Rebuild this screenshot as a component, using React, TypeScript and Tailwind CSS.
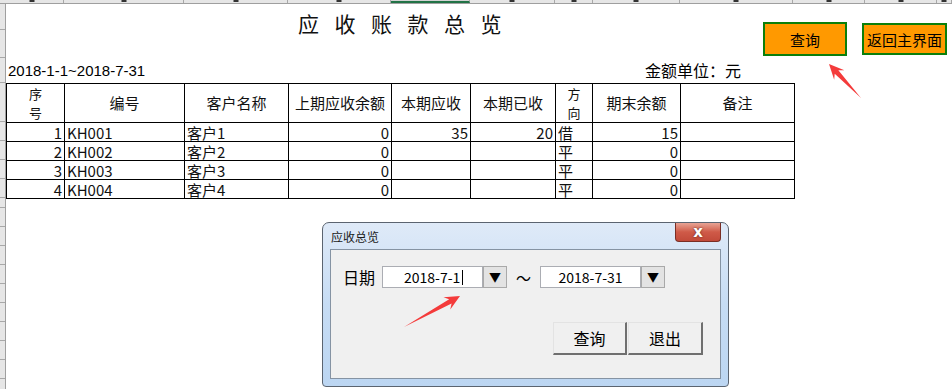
import React from "react"

const cjk = { fontFamily: '"Noto Sans CJK SC", "Liberation Sans", sans-serif' }

const colHeads = [64, 120, 104, 103, 79, 85, 38, 87, 113, 72, 72, 15]
const rowHeads = [26, 28, 25, 39, 19, 19, 19, 19, 10, 19, 19, 19, 19, 19, 19, 19, 19, 19, 19]

const rows = [
  { no: 1, code: "KH001", name: "客户1", prev: "0", due: "35", got: "20", dir: "借", end: "15" },
  { no: 2, code: "KH002", name: "客户2", prev: "0", due: "", got: "", dir: "平", end: "0" },
  { no: 3, code: "KH003", name: "客户3", prev: "0", due: "", got: "", dir: "平", end: "0" },
  { no: 4, code: "KH004", name: "客户4", prev: "0", due: "", got: "", dir: "平", end: "0" },
]

// red snipping-tool style arrow, tail -> tip
function arrowPoints(sx: number, sy: number, tx: number, ty: number) {
  const len = Math.hypot(tx - sx, ty - sy)
  const dx = (tx - sx) / len
  const dy = (ty - sy) / len
  const nx = -dy
  const ny = dx
  const head = 15
  const bx = tx - dx * (head - 4)
  const by = ty - dy * (head - 4)
  const wx = tx - dx * head
  const wy = ty - dy * head
  const p = [
    [sx, sy],
    [bx + nx * 2.5, by + ny * 2.5],
    [wx + nx * 7, wy + ny * 7],
    [tx, ty],
    [wx - nx * 7, wy - ny * 7],
    [bx - nx * 2.5, by - ny * 2.5],
  ]
  return p.map((q) => q.join(",")).join(" ")
}

function Cell({ children, align = "left" }: { children?: React.ReactNode; align?: "left" | "right" }) {
  return (
    <td
      className={`border border-black px-[2px] py-0 text-[15px] leading-none text-[#111] ${
        align === "right" ? "text-right" : "text-left"
      }`}
    >
      {children}
    </td>
  )
}

function Stacked({ a, b }: { a: string; b: string }) {
  return (
    <div className="flex flex-col items-center">
      <div className="text-[13px] leading-[19px]">{a}</div>
      <div className="text-[13px] leading-[19px]">{b}</div>
    </div>
  )
}

function DropBtn() {
  return (
    <div className="flex h-[22px] w-[24px] items-center justify-center border border-[#a9a9a9] bg-[#e3e3e3] text-[12px] leading-none text-black">
      ▼
    </div>
  )
}

export default function App() {
  return (
    <div className="relative flex h-[389px] w-[952px] flex-col overflow-hidden bg-white" style={cjk}>
      {/* column headers strip */}
      <div className="flex h-[4px] shrink-0 border-b border-[#9f9f9f] bg-[#e6e6e6]">
        {colHeads.map((w, i) => (
          <div
            key={i}
            className={`relative h-full shrink-0 border-r border-[#a8a8a8] ${i === 4 ? "border-b-2 border-b-[#217346] bg-[#d3d3d3]" : ""}`}
            style={{ width: w }}
          >
            <div className="absolute bottom-[1px] left-1/2 h-[2px] w-[5px] -translate-x-1/2 bg-[#333]" />
          </div>
        ))}
      </div>

      <div className="flex flex-1">
        {/* row headers strip */}
        <div className="flex w-[6px] shrink-0 flex-col border-r border-[#9f9f9f] bg-[#e6e6e6]">
          {rowHeads.map((h, i) => (
            <div key={i} className="shrink-0 border-b border-[#a8a8a8]" style={{ height: h }} />
          ))}
        </div>

        {/* sheet */}
        <div className="flex w-[788px] flex-col">
          <div className="flex h-[54px] justify-center pl-[15px] pt-[9px]">
            <div className="text-[21px] leading-none tracking-[15.5px] text-[#111]">应收账款总览</div>
          </div>
          <div className="flex h-[25px] items-end justify-between pb-[5px] pl-[2px] pr-[53px]">
            <span className="text-[15px] leading-none text-black" style={{ fontFamily: '"Liberation Sans", sans-serif' }}>
              2018-1-1~2018-7-31
            </span>
            <span className="text-[16px] leading-none text-black">金额单位：元</span>
          </div>

          <table className="w-[788px] table-fixed border-collapse">
            <colgroup>
              <col className="w-[58px]" />
              <col className="w-[120px]" />
              <col className="w-[104px]" />
              <col className="w-[103px]" />
              <col className="w-[79px]" />
              <col className="w-[85px]" />
              <col className="w-[37px]" />
              <col className="w-[88px]" />
              <col className="w-[114px]" />
            </colgroup>
            <thead>
              <tr className="h-[39px] text-[15px] font-normal text-[#111]">
                <th className="border border-black font-normal">
                  <Stacked a="序" b="号" />
                </th>
                <th className="border border-black font-normal">编号</th>
                <th className="border border-black font-normal">客户名称</th>
                <th className="border border-black font-normal">上期应收余额</th>
                <th className="border border-black font-normal">本期应收</th>
                <th className="border border-black font-normal">本期已收</th>
                <th className="border border-black font-normal">
                  <Stacked a="方" b="向" />
                </th>
                <th className="border border-black font-normal">期末余额</th>
                <th className="border border-black font-normal">备注</th>
              </tr>
            </thead>
            <tbody>
              {rows.map((r) => (
                <tr key={r.no} className="h-[19px]">
                  <Cell align="right">{r.no}</Cell>
                  <Cell>{r.code}</Cell>
                  <Cell>{r.name}</Cell>
                  <Cell align="right">{r.prev}</Cell>
                  <Cell align="right">{r.due}</Cell>
                  <Cell align="right">{r.got}</Cell>
                  <Cell>{r.dir}</Cell>
                  <Cell align="right">{r.end}</Cell>
                  <Cell />
                </tr>
              ))}
            </tbody>
          </table>
        </div>
      </div>

      {/* floating sheet buttons */}
      <div className="absolute left-[763px] top-[22px] flex h-[34px] w-[84px] items-center justify-center border-2 border-[#0b7f0b] bg-[#ff9900] text-[15px] leading-none text-black">
        查询
      </div>
      <div className="absolute left-[862px] top-[23px] flex h-[32px] w-[85px] items-center justify-center border-2 border-[#0b7f0b] bg-[#ff9900] text-[15px] leading-none text-black">
        返回主界面
      </div>

      {/* dialog window */}
      <div className="absolute left-[322px] top-[222px] flex h-[165px] w-[407px] flex-col rounded-t-[7px] rounded-b-[4px] border border-[#5b6470] bg-gradient-to-b from-[#dfeaf8] via-[#c6dcf4] to-[#bcd6f2]">
        <div className="relative flex h-[26px] shrink-0 items-center pl-[8px] pt-[2px]">
          <span className="text-[12px] leading-none text-[#1a1a1a]">应收总览</span>
          <div className="absolute right-[7px] top-0 flex h-[19px] w-[46px] items-center justify-center rounded-b-[4px] border border-t-0 border-[#7a2e25] bg-gradient-to-b from-[#e7a394] via-[#cf5a48] to-[#c24a3a]">
            <span
              className="text-[15px] font-bold leading-none text-white"
              style={{ fontFamily: '"DejaVu Sans", sans-serif', textShadow: "0 0 2px #4a1a12" }}
            >
              x
            </span>
          </div>
        </div>
        <div className="mx-[7px] mb-[7px] flex flex-1 flex-col border border-[#8593a3] bg-[#f0f0f0]">
          <div className="flex items-center pl-[12px] pt-[16px]">
            <span className="mr-[7px] text-[16px] leading-none text-black">日期</span>
            <div className="flex h-[22px] w-[101px] items-center border border-[#abadb3] bg-white pl-[21px] text-[14px] leading-none text-black">
              2018-7-1<span className="ml-[2px] inline-block h-[15px] w-px bg-black" />
            </div>
            <DropBtn />
            <span className="mx-[9px] text-[15px] leading-none text-black">～</span>
            <div className="flex h-[22px] w-[101px] items-center justify-center border border-[#abadb3] bg-white text-[14px] leading-none text-black">
              2018-7-31
            </div>
            <DropBtn />
          </div>
          <div className="mt-[34px] flex justify-end gap-[1px] pr-[17px]">
            <div className="flex h-[33px] w-[74px] items-center justify-center border border-b-2 border-r-2 border-[#e3e3e3] border-b-[#6f6f6f] border-r-[#6f6f6f] bg-[#f0f0f0] text-[16px] leading-none text-black">
              查询
            </div>
            <div className="flex h-[33px] w-[75px] items-center justify-center border border-b-2 border-r-2 border-[#e3e3e3] border-b-[#6f6f6f] border-r-[#6f6f6f] bg-[#f0f0f0] text-[16px] leading-none text-black">
              退出
            </div>
          </div>
        </div>
      </div>

      {/* annotation arrows */}
      <svg className="pointer-events-none absolute left-0 top-0" width="952" height="389">
        <polygon points={arrowPoints(861, 98, 829, 64)} fill="#f43b3b" />
        <polygon points={arrowPoints(404, 327, 460, 296)} fill="#f43b3b" />
      </svg>
    </div>
  )
}
